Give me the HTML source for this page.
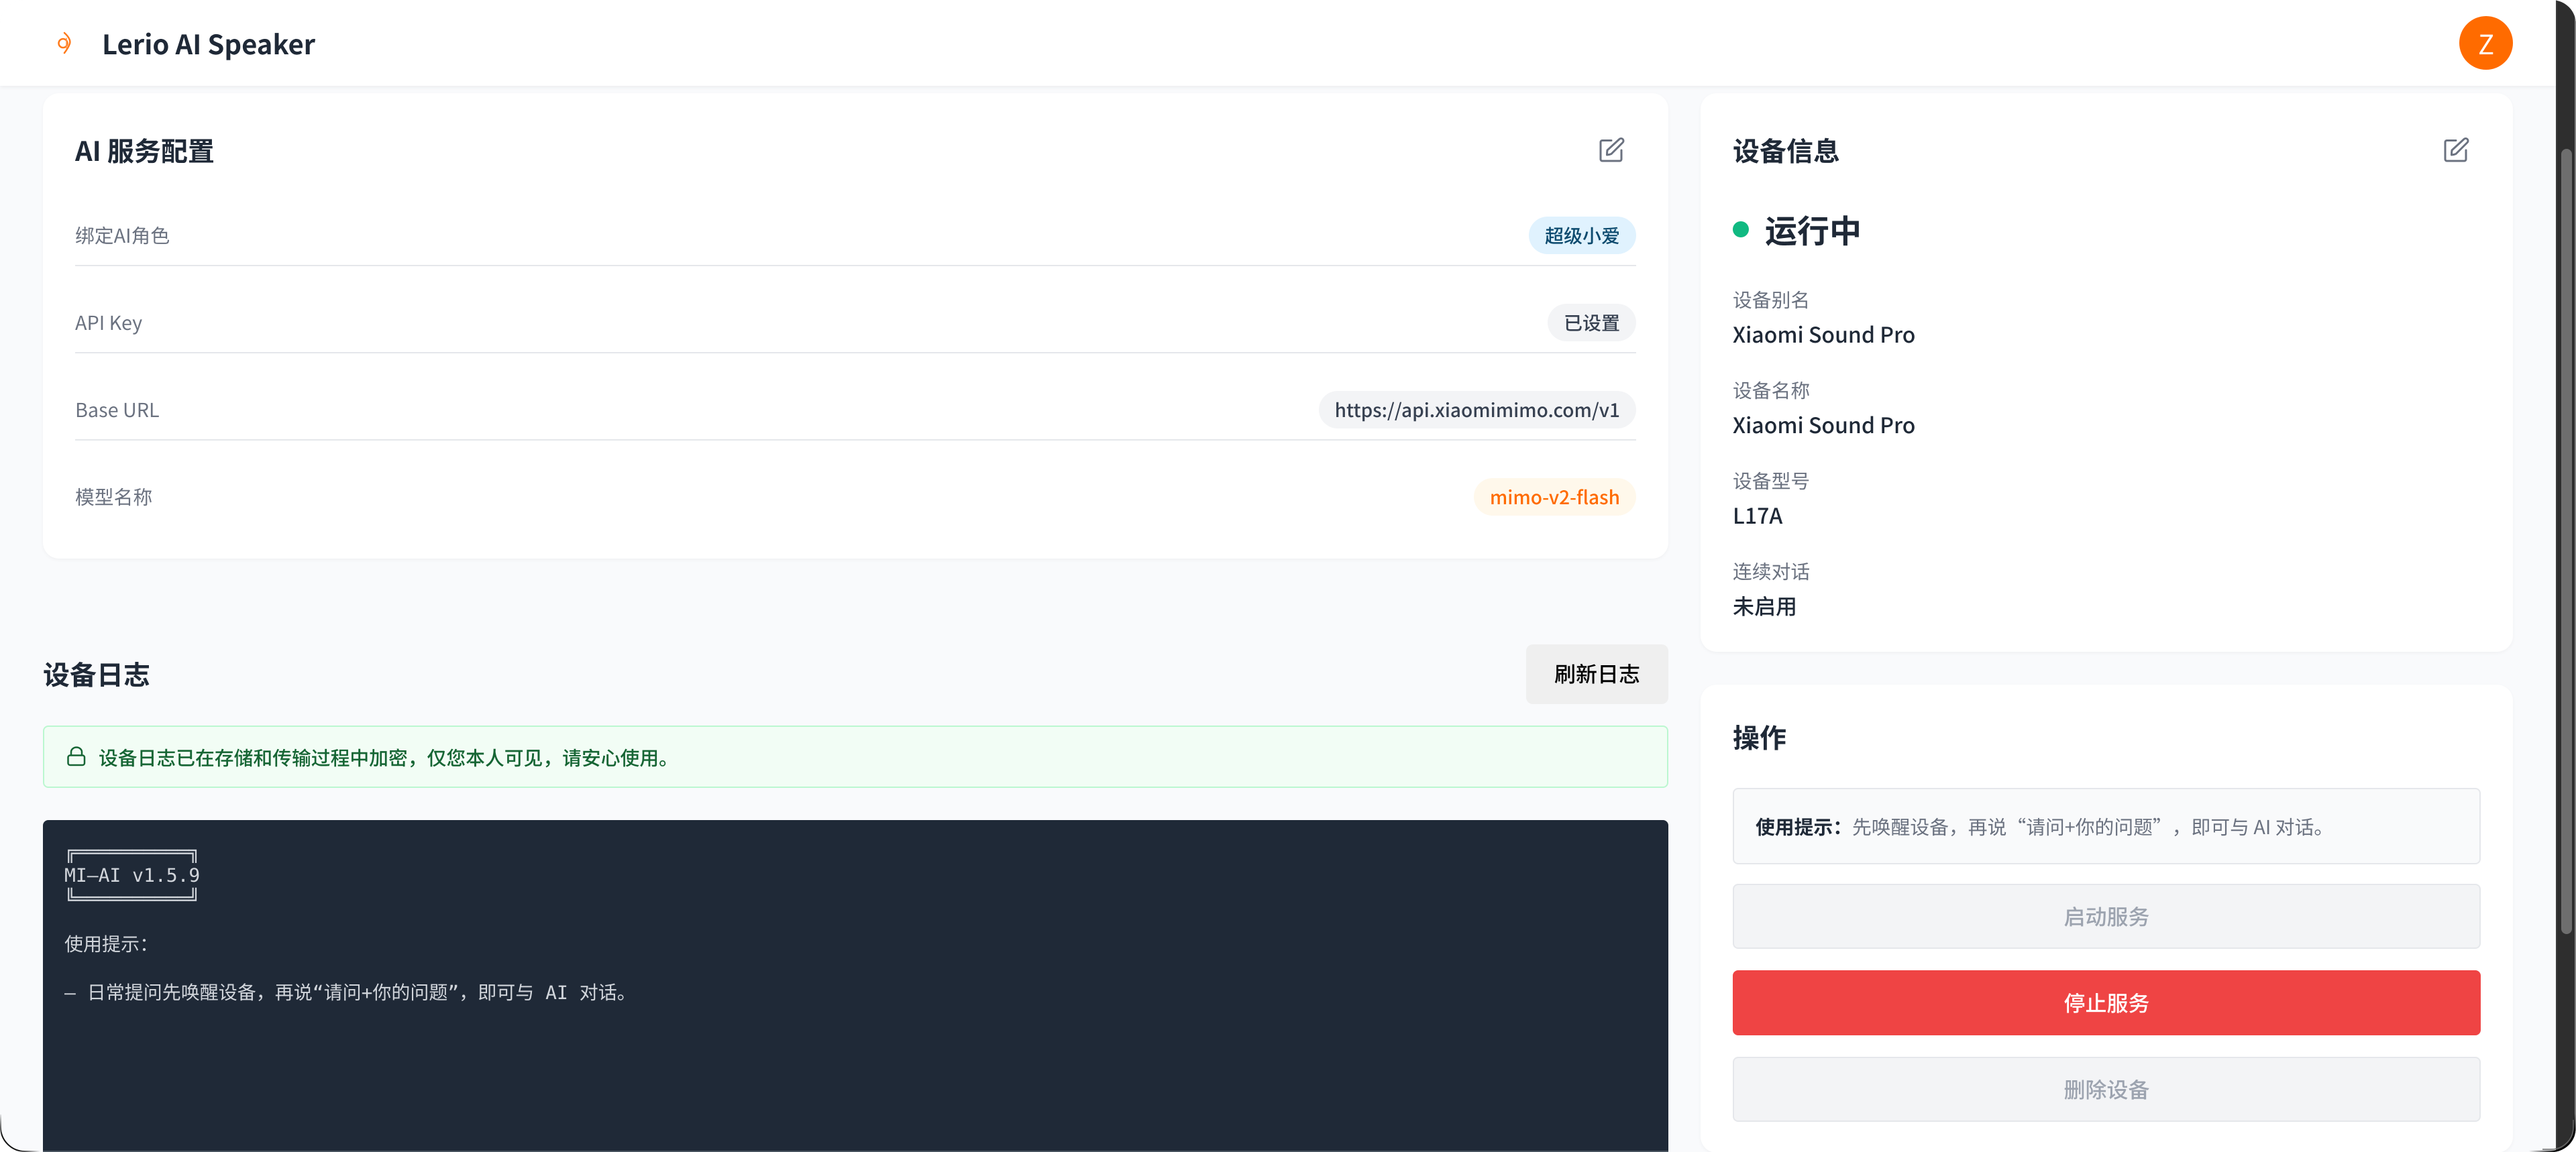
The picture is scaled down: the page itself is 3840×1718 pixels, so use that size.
<!DOCTYPE html>
<html lang="zh-CN">
<head>
<meta charset="utf-8">
<title>Lerio AI Speaker</title>
<style>
*{box-sizing:border-box}
html,body{margin:0;padding:0;width:3840px;height:1718px;overflow:hidden;background:#fff}
body{font-family:"Noto Sans CJK SC","Liberation Sans",sans-serif;color:#1f2937;text-rendering:geometricPrecision}
#win{position:absolute;left:0;top:0;width:3840px;height:1718px;border-radius:36px;overflow:hidden;background:#f9fafc}
.a{position:absolute;white-space:pre}
.card{position:absolute;background:#fff;border-radius:24px;box-shadow:0 2px 6px rgba(0,0,0,.04)}
.h{font-size:40px;font-weight:600;line-height:56px;color:#1f2937}
.lb{font-size:28.8px;line-height:40px;color:#6b7280}
.val{font-size:32px;line-height:44px;color:#1f2937;font-weight:500}
.pill{position:absolute;right:48px;height:56px;border-radius:28px;padding:0 24px;font-size:28px;line-height:56px;white-space:pre;font-weight:500}
.ln{position:absolute;left:48px;right:48px;height:2px;background:#e5e7eb}
.btn{position:absolute;left:2583px;width:1115px;height:97px;border-radius:8px;font-size:32px;line-height:93px;text-align:center;background:#f3f4f6;border:2px solid #e5e7eb;color:#9ca3af;font-weight:500}
.qo{display:inline-block;width:1em;text-align:right}
.qc{display:inline-block;width:1em;text-align:left}
#term{position:absolute;left:64px;top:1223px;width:2423px;height:520px;background:#1f2937;border-radius:8px}
#term pre{margin:0;position:absolute;left:32px;top:30px;font-family:"DejaVu Sans Mono","WenQuanYi Zen Hei",monospace;font-size:28px;line-height:35px;color:#d1d5db}
#term pre span{position:relative;top:-2px}
</style>
</head>
<body>
<div id="win">
  <!-- left card -->
  <div class="card" style="left:64px;top:139px;width:2423px;height:694px">
    <div class="a h" style="left:48px;top:56px">AI 服务配置</div>
    <svg style="position:absolute;left:2317px;top:61px" width="44" height="44" viewBox="0 0 44 44" fill="none" stroke="#6b7280" stroke-width="3" stroke-linecap="round" stroke-linejoin="round"><path d="M21 9.500H7.500A2.500 2.500 0 0 0 5 12V37.500A2.500 2.500 0 0 0 7.500 40H33.500A2.500 2.500 0 0 0 36 37.500V24"/><path d="M15 24L33 7.500a3.500 3.500 0 0 1 5 5L21 29.500Q17.500 31 14.500 31Q14.500 27 15 24Z"/></svg>
    <div class="a lb" style="left:48px;top:192px">绑定AI角色</div>
    <div class="pill" style="top:184px;background:#e0f2fe;color:#0c4a6e">超级小爱</div>
    <div class="ln" style="top:256px"></div>
    <div class="a lb" style="left:48px;top:322px">API Key</div>
    <div class="pill" style="top:314px;background:#f3f4f6;color:#374151">已设置</div>
    <div class="ln" style="top:386px"></div>
    <div class="a lb" style="left:48px;top:452px">Base URL</div>
    <div class="pill" style="top:444px;background:#f3f4f6;color:#374151">https://api.xiaomimimo.com/v1</div>
    <div class="ln" style="top:516px"></div>
    <div class="a lb" style="left:48px;top:582px">模型名称</div>
    <div class="pill" style="top:574px;background:#fff8eb;color:#ff6b00">mimo-v2-flash</div>
  </div>

  <!-- logs -->
  <div class="a h" style="left:64px;top:976px">设备日志</div>
  <div style="position:absolute;left:2275px;top:961px;width:212px;height:89px;background:#efefef;border-radius:10px;font-size:32px;line-height:87px;text-align:center;color:#000;font-weight:500">刷新日志</div>
  <div style="position:absolute;left:64px;top:1082px;width:2423px;height:93px;background:#f2fdf5;border:2px solid #bbf7d0;border-radius:8px"></div>
  <svg style="position:absolute;left:96px;top:1110px" width="36" height="36" viewBox="0 0 36 36" fill="none" stroke="#166534" stroke-width="2.500"><rect x="5.500" y="16.500" width="24.500" height="14.500" rx="3"/><path d="M10 16.500V11.500a8 7 0 0 1 16 0V16.500"/></svg>
  <div class="a" style="left:147px;top:1110px;font-size:28.8px;line-height:40px;font-weight:500;color:#166534">设备日志已在存储和传输过程中加密，仅您本人可见，请安心使用。</div>
  <div id="term"><pre>╔══════════╗
MI–AI v1.5.9
╚══════════╝

<span>使用提示：</span>

– 日常提问先唤醒设备，再说“请问+你的问题”，即可与 AI 对话。</pre></div>

  <!-- device info -->
  <div class="card" style="left:2535px;top:139px;width:1211px;height:833px">
    <div class="a h" style="left:48px;top:56px">设备信息</div>
    <svg style="position:absolute;left:1105px;top:61px" width="44" height="44" viewBox="0 0 44 44" fill="none" stroke="#6b7280" stroke-width="3" stroke-linecap="round" stroke-linejoin="round"><path d="M21 9.500H7.500A2.500 2.500 0 0 0 5 12V37.500A2.500 2.500 0 0 0 7.500 40H33.500A2.500 2.500 0 0 0 36 37.500V24"/><path d="M15 24L33 7.500a3.500 3.500 0 0 1 5 5L21 29.500Q17.500 31 14.500 31Q14.500 27 15 24Z"/></svg>
    <div style="position:absolute;left:48px;top:191px;width:24px;height:24px;border-radius:50%;background:#10b981"></div>
    <div class="a" style="left:96px;top:167px;font-size:48px;line-height:70px;font-weight:600">运行中</div>
    <div class="a lb" style="left:48px;top:288px">设备别名</div>
    <div class="a val" style="left:48px;top:337px">Xiaomi Sound Pro</div>
    <div class="a lb" style="left:48px;top:423px">设备名称</div>
    <div class="a val" style="left:48px;top:472px">Xiaomi Sound Pro</div>
    <div class="a lb" style="left:48px;top:558px">设备型号</div>
    <div class="a val" style="left:48px;top:607px">L17A</div>
    <div class="a lb" style="left:48px;top:693px">连续对话</div>
    <div class="a val" style="left:48px;top:742px">未启用</div>
  </div>

  <!-- actions -->
  <div class="card" style="left:2535px;top:1021px;width:1211px;height:698px">
    <div class="a h" style="left:48px;top:49px">操作</div>
  </div>
  <div style="position:absolute;left:2583px;top:1175px;width:1115px;height:114px;background:#f9fafb;border:2px solid #e5e7eb;border-radius:8px"></div>
  <div class="a" style="left:2617px;top:1213px;font-size:28.8px;line-height:40px;color:#6b7280"><b style="font-weight:600;color:#1f2937">使用提示：</b>先唤醒设备，再说<span class="qo">“</span>请问+你的问题<span class="qc">”</span>，即可与 AI 对话。</div>
  <div class="btn" style="top:1318px">启动服务</div>
  <div class="btn" style="top:1447px;background:#ef4444;border-color:#ef4444;color:#fff">停止服务</div>
  <div class="btn" style="top:1576px">删除设备</div>

  <!-- header -->
  <div style="position:absolute;left:0;top:0;width:3810px;height:128px;background:#fff;box-shadow:0 2px 6px rgba(0,0,0,.06)"></div>
  <svg style="position:absolute;left:80px;top:44px" width="32" height="40" viewBox="80 44 32 40" fill="none" stroke="#ff7a1a" stroke-linecap="round"><circle cx="94" cy="64.500" r="6.500" stroke-width="2.500"/><path d="M96 49Q106 58 104 65Q102 71 96 79" stroke-width="2.500"/><path d="M99 57V72" stroke-width="1.500" stroke="#ff9a50"/></svg>
  <div class="a h" style="left:152px;top:36px">Lerio AI Speaker</div>
  <div style="position:absolute;left:3666px;top:24px;width:80px;height:80px;border-radius:50%;background:#ff6b00;color:#fff;font-size:40px;line-height:80px;text-align:center;font-weight:400">Z</div>

  <!-- scrollbar -->
  <div style="position:absolute;left:3810px;top:0;width:30px;height:1718px;background:#2e2e2e"></div>
  <div style="position:absolute;left:3810px;top:0;width:2px;height:1718px;background:#3a3a3a"></div>
  <div style="position:absolute;left:3818px;top:222px;width:16px;height:1171px;border-radius:8px;background:#6e6e6e"></div>
  <div style="position:absolute;left:3838px;top:0;width:2px;height:1718px;background:#808080"></div>
  <div style="position:absolute;left:64px;top:1716px;width:2423px;height:2px;background:#4a5560"></div>
</div>

<!-- window rim -->
<svg style="position:absolute;left:0;top:0" width="3840" height="1718" viewBox="0 0 3840 1718" fill="none">
  <defs>
    <linearGradient id="g1" gradientUnits="userSpaceOnUse" x1="0" y1="1660" x2="60" y2="1717">
      <stop offset="0" stop-color="#000" stop-opacity="0"/>
      <stop offset=".3" stop-color="#111"/>
      <stop offset=".7" stop-color="#111"/>
      <stop offset="1" stop-color="#000" stop-opacity="0"/>
    </linearGradient>
    <linearGradient id="g2" gradientUnits="userSpaceOnUse" x1="3770" y1="1717" x2="3838" y2="1660">
      <stop offset="0" stop-color="#000" stop-opacity="0"/>
      <stop offset=".35" stop-color="#000"/>
      <stop offset=".8" stop-color="#000"/>
      <stop offset="1" stop-color="#000" stop-opacity="0"/>
    </linearGradient>
  </defs>
  <path d="M1 1662V1681A36 36 0 0 0 37 1717H62" stroke="url(#g1)" stroke-width="2"/>
  <path d="M3838 1660V1682A35 35 0 0 1 3803 1717H3770" stroke="url(#g2)" stroke-width="2.500"/>
  <path d="M3836 1670V1681A33 33 0 0 1 3803 1714H3790" stroke="#666" stroke-width="1.500"/>
</svg>
</body>
</html>
